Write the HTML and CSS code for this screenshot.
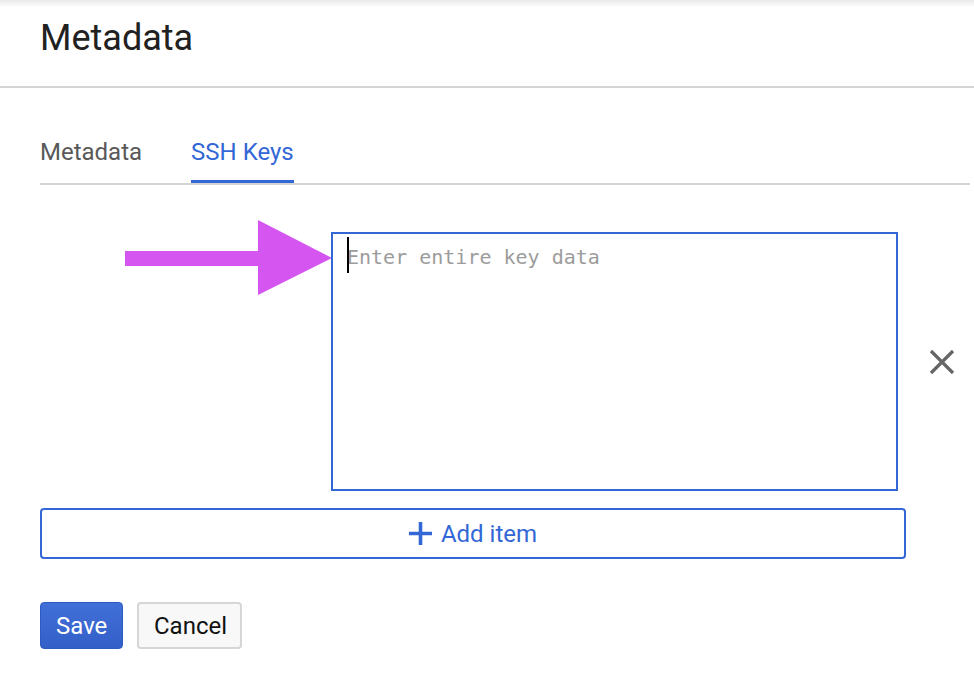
FILE: index.html
```html
<!DOCTYPE html>
<html>
<head>
<meta charset="utf-8">
<link rel="stylesheet" href="styles.css">
</head>
<body>
<header class="header">
  <h1 class="title">Metadata</h1>
</header>
<main class="content">
  <nav class="tabs">
    <div class="tab">Metadata</div>
    <div class="tab active">SSH Keys</div>
  </nav>
  <div class="key-row">
    <svg class="arrow" width="207" height="75" viewBox="0 0 207 75"><polygon points="0,31 133,31 133,0 207,38 133,75 133,46 0,46" fill="#d455ef"/></svg>
    <div class="key-box">
      <textarea class="key-input" placeholder="Enter entire key data"></textarea>
      <span class="caret"></span>
    </div>
    <button class="remove" aria-label="Remove">
      <svg width="26" height="26" viewBox="0 0 26 26"><path d="M2 2 L24 24 M24 2 L2 24" stroke="#666" stroke-width="3.2" fill="none"/></svg>
    </button>
  </div>
  <button class="add-item">
    <svg width="23" height="23" viewBox="0 0 23 23"><path d="M11.5 0 V23 M0 11.5 H23" stroke="#3367d6" stroke-width="3.6" fill="none"/></svg>
    <span>Add item</span>
  </button>
  <div class="actions">
    <button class="btn btn-primary">Save</button>
    <button class="btn btn-secondary">Cancel</button>
  </div>
</main>
</body>
</html>
```
FILE: styles.css
```css
html, body {
  margin: 0;
  padding: 0;
}
body {
  font-family: Roboto, "Liberation Sans", Arial, sans-serif;
  background: linear-gradient(#e9e9e9, #ffffff 7px) no-repeat;
  background-color: #fff;
  width: 974px;
  height: 680px;
  overflow: hidden;
}
.header {
  border-bottom: 2px solid #d4d4d4;
  padding-left: 40px;
  box-sizing: border-box;
  height: 88px;
}
.title {
  margin: 0;
  padding-top: 16px;
  font-size: 36px;
  font-weight: 400;
  line-height: 44px;
  color: #212121;
}
.content {
  padding: 0 4px 0 40px;
}
.tabs {
  margin-top: 50px;
  display: flex;
  gap: 49px;
  border-bottom: 2px solid #d4d4d4;
}
.tab {
  font-size: 24px;
  line-height: 28px;
  color: #595959;
  padding-bottom: 14px;
  border-bottom: 3px solid transparent;
}
.tab.active {
  color: #3367d6;
  border-bottom-color: #3367d6;
}
.key-row {
  position: relative;
  display: flex;
  align-items: center;
  margin-top: 47px;
}
.arrow {
  position: absolute;
  left: 85px;
  top: -12px;
}
.key-box {
  position: relative;
  margin-left: 291px;
  width: 567px;
  height: 259px;
}
.key-input {
  display: block;
  box-sizing: border-box;
  width: 567px;
  height: 259px;
  margin: 0;
  border: 2px solid #3367d6;
  border-radius: 0;
  padding: 10px 14px;
  font-family: "DejaVu Sans Mono", "Liberation Mono", monospace;
  font-size: 20px;
  line-height: 26px;
  resize: none;
  outline: none;
  color: #222;
}
.key-input::placeholder {
  color: #9c9c9c;
}
.caret {
  position: absolute;
  left: 16px;
  top: 5px;
  width: 2px;
  height: 36px;
  background: #000;
}
.remove {
  margin-left: 31px;
  padding: 0;
  border: 0;
  background: none;
  width: 26px;
  height: 26px;
  display: flex;
}
.add-item {
  margin-top: 17px;
  width: 866px;
  height: 51px;
  box-sizing: border-box;
  border: 2px solid #3367d6;
  border-radius: 4px;
  background: #fff;
  display: flex;
  align-items: center;
  justify-content: center;
  gap: 9px;
  font-family: Roboto, "Liberation Sans", Arial, sans-serif;
  font-size: 24px;
  color: #3367d6;
  padding: 0;
}
.actions {
  margin-top: 43px;
  display: flex;
  gap: 14px;
}
.btn {
  font-family: Roboto, "Liberation Sans", Arial, sans-serif;
  font-size: 24px;
  height: 47px;
  box-sizing: border-box;
  border-radius: 4px;
  padding: 0 15px;
  margin: 0;
}
.btn-primary {
  width: 83px;
  background: linear-gradient(#416fd8, #3360c8);
  border: 1px solid #2e5bc0;
  color: #fff;
}
.btn-secondary {
  width: 105px;
  background: #f8f8f8;
  border: 2px solid #d6d6d6;
  color: #111;
}
```
